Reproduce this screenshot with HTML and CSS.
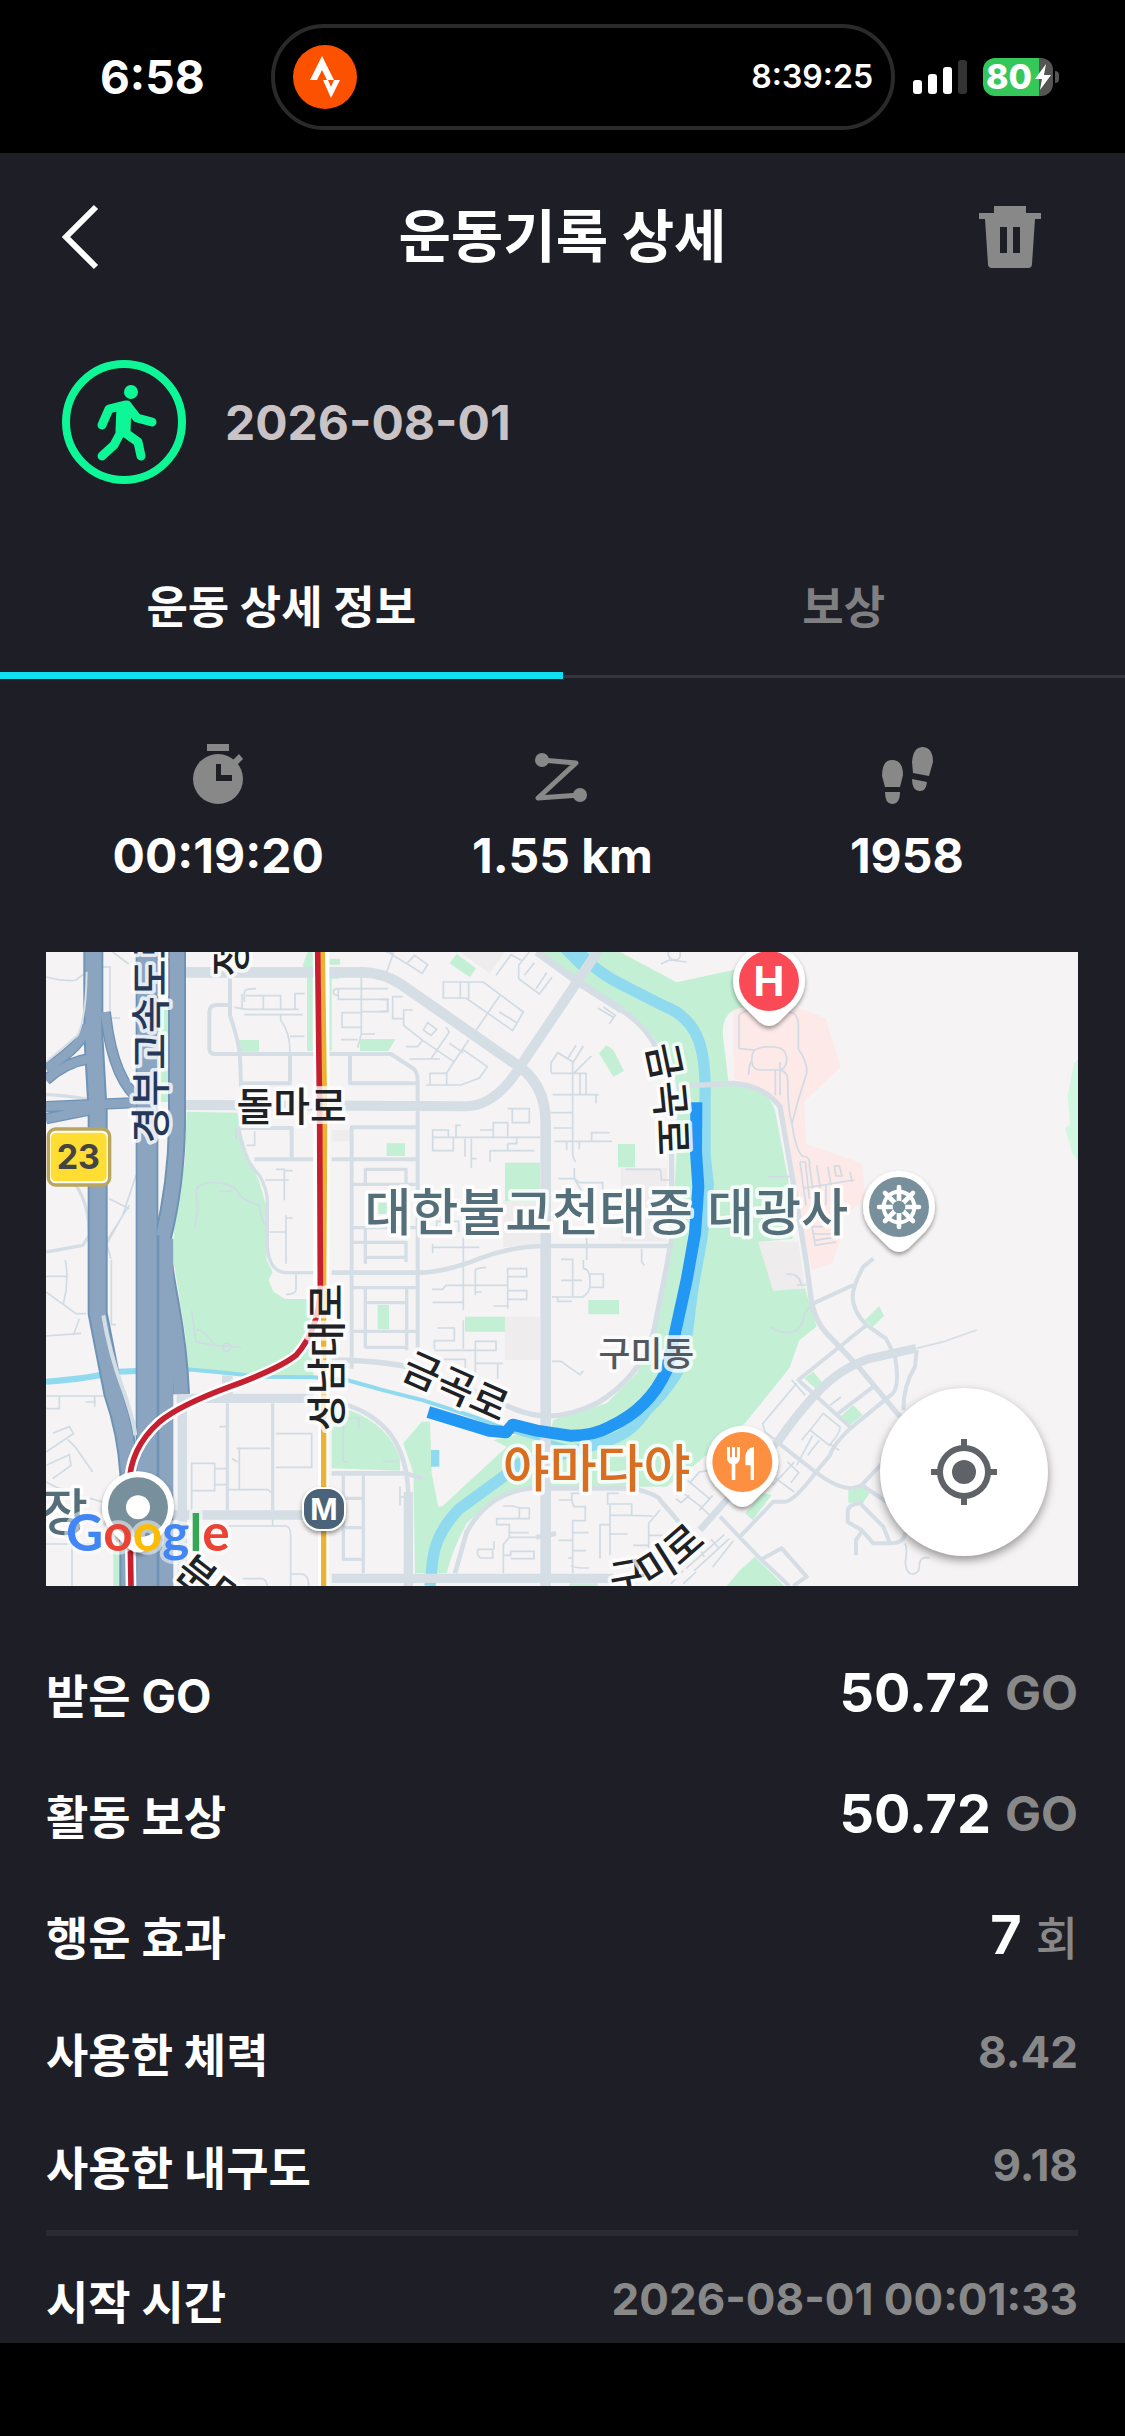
FILE: index.html
```
<!DOCTYPE html>
<html lang="ko">
<head>
    <meta charset="UTF-8">
    <meta name="viewport" content="width=device-width, initial-scale=1.0">
    <title>운동기록 상세</title>
    <link rel="stylesheet" href="styles.css">
</head>
<body>
<div class="status-bar">
    <span class="clock">6:58</span>
    <div class="island">
        <svg class="island-icon" viewBox="0 0 64 64">
            <circle cx="32" cy="32" r="32" fill="#fc5200"/>
            <path d="M29 11 L41 35 H34 L29 25 L24 35 H17Z" fill="#fff"/>
            <path d="M30 35 H35 L38 42 L41 35 H47 L38 53Z" fill="#fff"/>
        </svg>
        <span class="timer">8:39:25</span>
    </div>
    <div class="indicators">
        <svg class="signal" viewBox="0 0 54 34">
            <rect x="0" y="20" width="9" height="14" rx="3" fill="#fff"/>
            <rect x="15" y="14" width="9" height="20" rx="3" fill="#fff"/>
            <rect x="30" y="7" width="9" height="27" rx="3" fill="#fff"/>
            <rect x="45" y="0" width="9" height="34" rx="3" fill="#333"/>
        </svg>
        <div class="battery">
            <span>80</span>
            <svg class="bolt" viewBox="0 0 18 26"><path d="M12 0 L1 15 H8 L6 26 L17 11 H10Z" fill="#fff"/></svg>
        </div>
    </div>
</div>

<main class="screen">
    <header class="top-bar">
        <button type="button" class="icon-button back" aria-label="뒤로">
            <svg class="back-icon" viewBox="0 0 38 66"><path d="M35 3 L5 33 L35 63" fill="none" stroke="#fff" stroke-width="6"/></svg>
        </button>
        <h1>운동기록 상세</h1>
        <button type="button" class="icon-button" aria-label="삭제">
            <svg class="trash-icon" viewBox="0 0 62 62">
                <path fill="#888" fill-rule="evenodd" d="M15 0 H47 V7 H62 V13 H56 L53 58 Q53 62 49 62 H13 Q9 62 9 58 L6 13 H0 V7 H15Z M21 21 H28 V47 H21Z M34 21 H41 V47 H34Z"/>
            </svg>
        </button>
    </header>

    <section class="workout">
        <svg class="walk-icon" viewBox="0 0 126 126" fill="none" stroke="#0df797" stroke-linecap="round" stroke-linejoin="round">
            <circle cx="63" cy="63" r="58" stroke-width="8"/>
            <circle cx="70" cy="33" r="7" fill="#0df797" stroke="none"/>
            <path d="M64 46 L48 50 L41 66 M66 46 L76 59 L91 63 M61 71 L53 86 L41 97 M63 73 L77 83 L80 97" stroke-width="9"/>
            <path d="M59 47 L67 47 L66 72 L58 72Z" fill="#0df797" stroke-width="7"/>
        </svg>
        <time>2026-08-01</time>
    </section>

    <nav class="tabs">
        <button type="button" class="tab active">운동 상세 정보</button>
        <button type="button" class="tab">보상</button>
    </nav>

    <section class="stats">
        <div class="stat">
            <svg viewBox="0 0 60 60">
                <rect x="19" y="0" width="22" height="7"/>
                <circle cx="30" cy="35" r="25"/>
                <path d="M43 18 L51 10 L55 15 L48 22Z"/>
                <path d="M28 20 H33 V31 H44 V37 H28Z" fill="#1e1e27"/>
            </svg>
            <span>00:19:20</span>
        </div>
        <div class="stat">
            <svg viewBox="0 0 60 60">
                <circle cx="10" cy="16" r="7"/>
                <circle cx="48" cy="51" r="7"/>
                <path d="M10 16 L44 19 L6 54 L48 51" fill="none" stroke="#888" stroke-width="5" stroke-linejoin="round"/>
            </svg>
            <span>1.55 km</span>
        </div>
        <div class="stat">
            <svg viewBox="0 0 60 60">
                <path d="M8 43 L5 32 Q5 16 15 16 Q26 16 26 31 L23 43Z M8 48 H23 Q23 60 15 60 Q8 60 8 48Z"/>
                <path d="M36 29 L35 18 Q36 3 46 3 Q56 4 56 18 L52 32Z M35 35 L50 38 Q49 48 42 47 Q35 46 35 35Z"/>
            </svg>
            <span>1958</span>
        </div>
    </section>

    <section class="map">
        <svg class="map-canvas" viewBox="0 0 3096 1902" role="img" aria-label="운동 경로 지도">
            <defs>
                <path id="pin" d="M-80 72 A108 108 0 1 1 80 72 L28 124 Q0 146 -28 124Z"/>
                <path id="curve-river" d="M1799 284 Q1836 400 1838 640"/>
                <path id="curve-gumi" d="M1698 1922 Q1798 1925 1884 1858 L2040 1722"/>
                <filter id="shadow" x="-30%" y="-30%" width="160%" height="160%">
                    <feDropShadow dx="0" dy="8" stdDeviation="7" flood-opacity="0.4"/>
                </filter>
            </defs>
            <rect width="3096" height="1902" fill="#f5f3f4"/>

            <!-- grey blocks and hospital -->
            <path class="block" d="M1242 0 H1377 L1330 64Z M1725 649 H1862 V869 H1725Z M1372 744 H1482 V884 H1372Z M1377 1094 H1482 V1224 H1377Z M857 534 H912 V568 H857Z"/>
            <path fill="#fde9e7" d="M2062 169 L2277 174 L2339 199 L2384 346 L2274 449 L2280 576 L2447 634 L2460 739 L2382 800 V864 L2357 934 L2297 954 L2202 480 Q2160 400 2064 382Z"/>

            <!-- parks -->
            <g fill="#c3f0d5">
                <path d="M422 479 L574 482 L582 524 Q600 610 640 690 L660 760 L662 924 L680 960 L668 984 L682 1019 L717 1041 H802 V1276 L425 1255 L418 1150 L382 920 L385 820 L417 624Z"/>
                <path d="M785 0 H800 V297 H783 V60 L770 40Z M850 0 V20 H882 V38 H850 V297 H857 V80 H880 V60 H850Z M577 264 H639 V299 H577Z M942 261 H1049 L1027 297 H942Z M997 752 H1022 V786 H997Z M1022 574 H1077 V612 H1022Z"/>
                <path d="M1232 6 L1290 49 L1272 76 L1210 34Z M1682 279 L1702 294 L1734 357 L1702 374 L1659 304Z M1716 576 H1767 V646 H1716Z M1377 632 H1482 V747 H1377Z"/>
                <path d="M1482 0 H1722 L1892 91 L2062 54 L2100 60 V165 Q2020 170 2032 264 L2047 385 L2052 400 Q2180 400 2192 500 L2227 684 L2240 860 L2137 870 L2182 1015 L2277 1009 L2312 1124 L2260 1164 L2230 1249 L2097 1414 L1932 1550 L1862 1604 H1500 Q1360 1620 1262 1714 Q1220 1790 1202 1864 H1107 L1102 1564 L1072 1474 L1127 1409 H1152 L1157 1564 L1177 1664 L1190 1662 L1382 1484 L1342 1464 L1517 1424 L1522 1404 L1682 1354 L1772 1264 L1822 1154 L1872 924 L1892 604 V409 L1882 350 L1822 254 L1742 174 L1602 84Z"/>
                <path d="M2127 1814 L2215 1902 H2042 L2082 1855Z M2500 1062 L2514 1092 L2480 1124 L2457 1104Z M2302 1259 L2332 1296 L2310 1312 L2275 1279Z M2422 1359 L2450 1389 L2412 1419 L2385 1392Z M2177 1629 L2120 1704 L2097 1684 L2150 1624Z M2407 1614 L2452 1604 L2470 1624 L2452 1652 H2407Z"/>
                <path d="M857 1374 L910 1374 Q1030 1420 1062 1520 V1556 L857 1549Z M1257 1094 H1377 V1139 H1257Z M1627 1044 H1719 V1087 H1627Z M995 1059 H1029 V1132 H995Z M202 1794 H222 V1902 H202Z M336 150 H366 V450 H336Z M1570 1894 H1655 V1902 H1570Z"/>
            </g>
            <path fill="#d3f8e2" d="M3096 322 L3084 334 L3065 431 L3072 519 L3057 526 L3079 604 L3096 629Z"/>
            <path class="block" d="M2137 869 H2257 L2277 1009 L2182 1016Z"/>

            <!-- water -->
            <g fill="none" stroke="#8fdaee">
                <path stroke-width="34" d="M1600 0 Q1652 64 1742 105 L1850 160 Q1932 190 1960 270 Q1980 330 1977 444 V610 L1987 700 L1967 864 L1942 1000 L1932 1074 Q1920 1200 1892 1264 Q1850 1330 1802 1374 Q1760 1440 1692 1464 L1562 1504 L1422 1534 L1372 1574 L1242 1669 Q1170 1740 1160 1824 L1152 1902"/>
                <path stroke-width="50" d="M1560 -20 L1630 50"/>
                <path stroke-width="16" d="M1920 200 Q1955 260 1965 330"/>
                <path stroke-width="18" d="M0 1289 Q130 1280 200 1260 L290 1256"/>
                <path stroke-width="12" d="M400 1250 Q520 1260 652 1274 L802 1276 L902 1284 Q960 1300 1002 1312 L1132 1345 L1282 1394 L1402 1439 L1620 1500"/>
            </g>
            <rect x="1155" y="1494" width="25" height="50" fill="#8fdaee"/>

            <!-- lanes -->
            <g class="lane">
                <path d="M0 75 Q60 90 90 84 L122 60 M160 45 H192 V198 H222 M200 0 L248 36 M595 150 V120 Q595 110 630 110 M600 131 H704 V172 M652 131 V170 M565 166 L600 172 H758 M747 172 V125 H776 M595 188 H770 M704 188 V205 Q732 240 732 300 M732 253 H775 M1027 110 H877 Q862 110 862 120 T877 130 M877 110 V142 H1025 V179 H946 V75 M946 182 H888 V226 H946 M946 179 V246 H987 M946 246 L935 287 M885 263 H935"/>
                <path d="M1020 0 L1042 4 L1022 60 M1032 4 L1082 35 L1106 10 L1145 38 L1128 64 L1085 36 M1192 90 H1312 L1432 180 L1400 236 L1260 138 H1192Z M1243 90 V138 M1268 90 V140 M1362 130 L1290 235 M1360 180 L1412 212 M1350 70 L1395 8 L1428 26 M1450 0 L1418 40 V80 L1480 126 L1518 76 M1435 70 L1465 32 M1470 110 L1502 62"/>
                <path d="M1002 142 H1025 V178 H1002 M1070 134 H1040 V200 H1073 V174 H1100 M1073 200 V220 L1130 265 L1222 328 M1080 284 H1115 L1130 265 M1145 212 L1172 232 L1155 250 L1132 234Z M1200 226 L1210 240 L1155 320 M1090 321 H1182 M1268 264 L1202 362 V398 M1250 292 L1324 344 L1300 378 L1245 399 H1140 M1152 398 V364 H1202 M1210 274 L1252 302"/>
                <path d="M1515 362 V332 L1535 302 L1582 330 L1612 282 M1515 364 H1620 V430 M1566 318 L1590 280 M1580 330 V610 L1588 630 M1602 364 V430 M1583 364 L1636 312 M1520 428 H1658 M1650 430 V454 M1515 482 H1580 M1522 528 H1580 M1525 568 H1698 M1637 568 V542 H1690 M1562 568 V594 M1600 568 V592 M1585 648 V680 L1620 740 M1537 680 H1585 L1600 692 H1670 V740 M1655 168 L1702 196 M1672 165 L1708 190 L1690 215 M1845 36 L1870 24 L1922 30 M1866 0 Q1866 24 1890 24 Q1906 20 1902 0"/>
                <path d="M1160 556 V534 H1207 V556 M1160 556 H1222 V596 H1160Z M1160 556 H1482 M1230 556 V520 H1245 M1302 534 H1342 V556 M1342 534 V512 H1385 V556 M1385 470 H1450 V512 H1399 V470 M1385 575 H1412 V556 M1385 575 V596 M1332 630 V596 H1465 M1257 560 V614 M1276 560 V648 M1276 620 H1292 M1738 652 H1840 Q1846 654 1846 684 H1870 M1160 886 H1300 M1160 876 V904 M1252 826 V1074 M1172 826 V808 H1238 V840 M1545 922 H1580 V1035 M1622 840 V924 M1787 890 V930 L1795 940"/>
                <path d="M1158 1012 H1190 L1200 1000 H1385 M1288 1030 V955 Q1290 948 1320 946 M1288 1020 H1308 M1385 1070 V950 H1442 V974 H1385 M1385 1016 H1442 V1042 H1385 M1342 1062 H1385 M1160 1051 H1254 M1252 1105 V1190 M1175 1128 H1225 V1166 H1165 V1190 M1165 1195 H1350 V1168 H1288 V1270 M1175 1222 H1258 V1250 M1288 1234 H1370 M1355 1234 V1280 M1518 1035 H1610 Q1635 1020 1632 990 Q1632 950 1612 950 V924 M1632 966 H1672 V1006 H1632 M1545 985 H1608 M1535 1035 V1048 H1578 M1518 1228 H1545 Q1575 1250 1602 1268 L1612 1256"/>
                <path d="M1372 1662 H1400 L1420 1668 H1450 V1700 H1352 V1718 H1390 V1756 M1420 1668 V1700 M1390 1742 H1448 M1390 1756 H1482 M1390 1756 L1372 1778 V1864 M1296 1792 H1340 V1818 H1305 Q1290 1810 1296 1792 M1344 1768 V1792 M1372 1810 H1394 V1798 H1464 V1820 H1394 M1574 1624 H1605 M1578 1625 Q1575 1650 1584 1664 H1618 V1706 H1580 V1864 M1538 1644 H1578 M1538 1765 H1580 M1578 1742 H1628 M1580 1796 H1620 M1566 1818 H1580 M1575 1840 Q1580 1848 1628 1848 M1718 1624 H1685 V1656 H1757 V1690 L1820 1692 M1692 1656 V1810 M1692 1690 H1755 M1692 1746 H1745 M1662 1820 V1718 H1690 M1842 1674 L1808 1714 V1810 M1808 1750 H1850 M1762 1780 H1808"/>
                <path d="M1890 1640 L1905 1652 L1930 1630 M1890 1630 L1900 1615 L1960 1660 L2002 1700 M1930 1594 L1960 1560 L1990 1555 M1925 1585 L1990 1640 M1960 1675 L2000 1630 M1920 1850 L2035 1748 M1945 1856 L2050 1760 M1975 1815 L1960 1790 M2000 1845 L2062 1766 M1995 1762 L2020 1790 M1875 1895 L1912 1856 M1912 1895 L1950 1860"/>
                <path d="M437 1686 V1534 H506 V1616 H437 M506 1550 H542 M506 1598 H542 M572 1489 H672 M580 1489 V1612 M546 1613 H665 L680 1625 M690 1445 H797 V1546 H690 M558 1520 L575 1530 M520 1424 H542 M546 1722 H720 Q734 1725 734 1750 V1902 M680 1700 V1722 M734 1866 H770 Q788 1870 788 1902 M590 1880 H650 Q662 1885 664 1902 M1062 1604 V1660 M1062 1635 H1075 M892 1400 V1530 H905 M892 1398 H940 M938 1396 V1430 M1010 1528 H1058"/>
                <path d="M0 973 H64 M58 924 Q70 990 52 1055 M0 1020 L90 1085 H120 M82 1150 L100 1100 M0 1152 L105 1144 M0 1332 H180 M40 1332 V1370 H0 M118 1350 H150 M146 1332 V1364 M20 1444 L70 1424 L82 1445 L0 1500 M65 1462 L90 1488 L140 1560 M0 1540 L70 1508 L75 1540 L20 1580 M0 1590 L30 1605 L100 1630 L170 1650 M78 1728 V1902 M0 1776 H170 M196 924 V1118 H210 M180 880 L230 790 L270 670 M190 740 L250 770 M250 760 L180 870 L195 920"/>
                <path d="M447 826 L455 770 L450 720 Q452 690 510 692 Q560 695 574 718 Q580 740 640 760 Q645 810 660 820 M520 718 H560 M437 1075 L450 1170 L505 1180 L585 1186 M450 1130 Q480 1140 505 1178 M530 1186 A12 12 0 1 1 554 1186 A12 12 0 1 1 530 1186 M690 652 H715 V745 M658 684 H728 M715 656 H740 M720 790 V935 M720 798 H740 M670 840 H720 M750 964 V1015 Q748 1025 720 1028 M626 538 V580 H602 M570 528 V560 M588 126 V170"/>
                <path d="M2079 290 V190 Q2085 180 2110 175 L2240 182 Q2257 190 2257 220 V290 Q2290 340 2280 370 L2255 450 L2238 515 Q2250 600 2270 612 Q2295 615 2290 640 L2310 770 M2079 290 L2125 294 Q2115 310 2118 330 Q2120 352 2140 354 H2200 Q2222 350 2222 320 Q2220 285 2180 285 H2150 L2125 294 M2108 368 Q2108 340 2118 325 M2188 354 V430 M2202 330 V430 M2200 352 Q2225 360 2225 380 Q2225 470 2238 515 M2262 630 L2280 760 M2262 630 H2278 L2290 740 M2275 708 L2425 684 M2312 640 L2325 720 M2346 645 L2355 700 M2365 642 H2380 L2388 672 H2370Z M2412 660 L2418 690 M2340 700 V760 M2298 824 L2308 880 L2370 870 M2298 824 H2330 M2302 846 H2365 M2305 865 L2365 856 M2165 674 H2232"/>
                <path d="M2172 1125 Q2200 1145 2240 1140 Q2270 1130 2275 1085 L2290 1065 M2222 966 Q2262 964 2265 998 M2252 999 H2280 M2157 1440 L2150 1415 L2252 1294 M2237 1284 L2278 1330 M2157 1440 L2192 1466 M2332 1384 L2382 1425 Q2385 1440 2350 1480 L2292 1434Z M2352 1360 L2385 1335 M2267 1465 L2292 1434 M2285 1510 L2320 1465 M2252 1540 L2300 1450 M2350 1475 L2380 1495 M2190 1580 L2245 1620 M2245 1530 L2180 1600 M2225 1530 L2258 1562 L2235 1592 M2577 1774 Q2585 1790 2578 1830 Q2580 1866 2600 1866 Q2622 1864 2620 1838 Q2622 1812 2650 1818"/>
            </g>

            <!-- streets -->
            <g class="street">
                <path d="M412 61 H952 Q1010 62 1062 95 L1400 330 Q1499 390 1499 510 V1902" stroke-width="32"/>
                <path d="M1657 -5 L1422 344 Q1350 460 1262 463 L412 459" stroke-width="30"/>
                <path d="M382 1689 H802 M857 1879 H1702 M392 1339 H802 M409 1339 V1902 M1087 1902 V1620" stroke-width="28"/>
                <path d="M544 1270 V1339" stroke-width="32"/>
                <path d="M1472 0 L1602 94 L1727 174" stroke-width="22"/>
                <path d="M1727 174 Q1802 224 1832 290 M1877 604 V860 L1862 944 L1822 1144 Q1780 1280 1652 1354 Q1560 1400 1480 1390 Q1420 1384 1340 1340 L1150 1262 Q1050 1226 857 1224 M1892 403 L2062 394 Q2152 400 2202 464 L2242 694 L2280 924 L2297 1054 Q2310 1110 2342 1144 L2437 1244 L2562 1394" stroke-width="16"/>
                <path d="M1087 1620 Q1080 1480 1002 1414 Q940 1360 857 1350 M857 1564 H1080 L1130 1580 M1227 1864 L1262 1740 Q1330 1620 1452 1609 H1762 Q1842 1630 1842 1644 L1902 1714 M857 962 H1122 Q1200 960 1300 920 Q1400 882 1502 882 H1872 M1470 1756 L1530 1745" stroke-width="14"/>
                <path d="M552 74 V190 Q582 280 582 320 L587 450 M552 159 H510 Q490 160 490 180 V290 Q490 306 510 306 H1035 L1095 345 Q1115 355 1115 385 V1200 M732 306 V394 H590 M912 306 V394 H1115 M580 528 H737 V622 M625 622 H802 M857 622 H1115 M1115 526 H917 V1250" stroke-width="12"/>
                <path d="M577 524 Q590 620 640 670 Q664 710 664 750 V884 Q670 960 720 962 H802 M917 697 H1115 M958 700 V652 H1080 V697 M917 827 H1115 M917 871 H1080 V930 M958 916 H1080 M958 827 V935 M917 1007 H1115 M958 1007 V1188 M958 1052 H1082 M917 1138 H1115 M958 1186 H1082 M1082 1007 V1195 M892 1564 V1822 H952 M952 1564 V1864 M892 1639 H952 M892 1727 H952 M544 1354 V1674 M680 1354 V1674 M0 428 Q60 430 130 442 M0 900 L110 880 L130 850 Q130 760 90 700" stroke-width="10"/>
                <path d="M2192 1474 Q2262 1374 2312 1324 Q2380 1250 2470 1220 L2610 1189" stroke-width="26"/>
                <path d="M2192 1474 L1962 1734" stroke-width="20"/>
                <path d="M2302 1054 L2422 999 M2482 920 L2452 944 Q2422 1000 2420 1030 Q2420 1080 2462 1119 L2520 1160 L2547 1214 Q2562 1300 2540 1325 L2412 1430 Q2360 1480 2352 1510 L2307 1564 Q2250 1640 2220 1649 H2182 L2082 1754 M2462 1119 L2257 1284 L2412 1424 M2482 1304 L2377 1384 M2192 1469 L2307 1559 Q2400 1630 2447 1599 L2522 1520 M2447 1599 L2522 1650 M2022 1694 L2142 1819 L2230 1902 M2142 1824 L2207 1789 L2282 1874 L2242 1902 M2452 1654 Q2405 1654 2405 1680 V1710 L2447 1734 L2482 1774 H2532 Q2577 1774 2577 1740 M2447 1659 L2512 1724 L2532 1774 M2447 1739 L2430 1764 V1809 M2612 1194 L2607 1244 Q2572 1300 2572 1374" stroke-width="12"/>
                <path d="M2612 1189 L2692 1169 L2792 1134" stroke-width="5"/>
            </g>

            <!-- expressways -->
            <g fill="none" stroke="#6f93b5">
                <path d="M142 -10 V250 L155 480 V1084 L202 1324 Q242 1440 250 1564 V1902" stroke-width="60"/>
                <path d="M393 -10 V520 Q390 700 350 860 Q345 900 375 1060 Q400 1200 405 1326" stroke-width="54"/>
                <path d="M303 -10 V1902" stroke-width="68"/>
                <path d="M0 384 Q60 330 130 320 M0 350 Q110 280 125 220 M178 180 Q200 390 290 450 M0 464 L270 452 M0 500 L150 470" stroke-width="34"/>
            </g>
            <g fill="none" stroke="#8ba4c0">
                <path d="M142 -10 V250 L155 480 V1084 L202 1324 Q242 1440 250 1564 V1902" stroke-width="48"/>
                <path d="M393 -10 V520 Q390 700 350 860 Q345 900 375 1060 Q400 1200 405 1326" stroke-width="42"/>
                <path d="M303 -10 V1902" stroke-width="58"/>
                <path d="M335 860 V1902" stroke-width="94"/>
                <path d="M0 384 Q60 330 130 320 M0 350 Q110 280 125 220 M178 180 Q200 390 290 450 M0 464 L270 452 M0 500 L150 470" stroke-width="26"/>
            </g>
            <path d="M336 850 V1902" fill="none" stroke="#6f93b5" stroke-width="8"/>
            <path d="M172 1090 Q190 1200 230 1310 Q262 1400 268 1450" fill="none" stroke="#d5dee5" stroke-width="12"/>
            <path d="M122 60 Q120 200 95 250 L0 330" fill="none" stroke="#d5dee5" stroke-width="6"/>

            <!-- railways -->
            <g fill="none">
                <path class="casing-wide" d="M826 -5 V1080"/>
                <path d="M832 1000 V1902" stroke="#fff" stroke-width="32"/>
                <path d="M824 1000 Q822 1130 750 1210 Q700 1250 552 1304 Q400 1360 340 1410 Q250 1490 250 1600 L255 1902" stroke="#fff" stroke-width="32"/>
                <path d="M829 -5 L836 500 L833 1000 V1902" stroke="#ecb233" stroke-width="16"/>
                <path d="M815 -5 L821 500 L823 1000 Q822 1130 750 1210 Q700 1250 552 1304 Q400 1360 340 1410 Q250 1490 250 1600 L255 1902" stroke="#c62030" stroke-width="17"/>
            </g>

            <!-- workout route -->
            <path d="M1951 451 L1950 600 L1957 704 L1947 844 L1922 984 L1887 1144 L1862 1254 Q1810 1370 1692 1424 Q1640 1452 1572 1451 L1472 1436 L1400 1418 L1380 1441 L1330 1436 L1147 1380" fill="none" stroke="#2297f3" stroke-width="36" stroke-linejoin="round"/>

            <!-- place names -->
            <g class="road-name">
                <text x="737" y="508" text-anchor="middle">돌마로</text>
                <text transform="translate(358 574) rotate(-90)" class="express">경부고속도로</text>
                <text transform="translate(598 74) rotate(-90)">정자로</text>
                <text transform="translate(884 1437) rotate(-90)">성남대로</text>
                <text transform="translate(1212 1343) rotate(24)" text-anchor="middle">금곡로</text>
                <text transform="translate(382 1868) rotate(38)">분당로</text>
                <text><textPath href="#curve-river">금곡로</textPath></text>
                <text><textPath href="#curve-gumi">구미로</textPath></text>
            </g>
            <text class="district" x="1801" y="1242" text-anchor="middle">구미동</text>
            <text class="place" x="1681" y="836" text-anchor="middle">대한불교천태종 대광사</text>
            <text class="place food" x="1652" y="1604" text-anchor="middle">야마다야</text>
            <text class="place" x="126" y="1736" text-anchor="end">주차장</text>

            <!-- pins -->
            <g transform="translate(2169 87)">
                <use href="#pin" fill="#fff" filter="url(#shadow)"/>
                <circle r="90" fill="#f94a55"/>
                <text class="pin-letter" y="45" text-anchor="middle">H</text>
            </g>
            <g transform="translate(2559 765)">
                <use href="#pin" fill="#fff" filter="url(#shadow)"/>
                <circle r="90" fill="#78909c"/>
                <circle r="46" fill="none" stroke="#fff" stroke-width="12"/>
                <path d="M0 -60 V60 M-60 0 H60 M-42 -42 L42 42 M-42 42 L42 -42" stroke="#fff" stroke-width="14" stroke-linecap="round"/>
                <circle r="19" fill="#78909c"/>
            </g>
            <g transform="translate(2089 1530)">
                <use href="#pin" fill="#fff" filter="url(#shadow)"/>
                <circle r="90" fill="#fc9040"/>
                <path fill="#fff" d="M-46 -45 H-37 V-14 H-31 V-45 H-22 V-14 H-16 V-45 H-7 V-14 Q-8 2 -21 7 V54 H-32 V7 Q-46 2 -46 -14Z M35 -45 V54 H25 V10 H9 V-14 Q10 -42 35 -45Z"/>
            </g>
            <g transform="translate(276 1666)">
                <use href="#pin" fill="#fff" filter="url(#shadow)"/>
                <circle r="90" fill="#78909c"/>
                <circle r="36" fill="#fff"/>
            </g>
            <g transform="translate(834 1671)">
                <rect x="-66" y="-66" width="132" height="132" rx="54" fill="#fff" filter="url(#shadow)"/>
                <rect x="-60" y="-60" width="120" height="120" rx="48" fill="#4a6378"/>
                <text class="metro" y="32" text-anchor="middle">M</text>
            </g>
            <rect x="7" y="531" width="184" height="168" rx="22" fill="#fff" stroke="#b9a55b" stroke-width="10"/>
            <rect x="14" y="542" width="168" height="146" rx="16" fill="#ffdd33"/>
            <text class="route-no" x="97" y="652" text-anchor="middle">23</text>

            <text class="google" x="60" y="1796"><tspan fill="#4285f4">G</tspan><tspan fill="#ea4335">o</tspan><tspan fill="#fbbc05">o</tspan><tspan fill="#4285f4">g</tspan><tspan fill="#34a853">l</tspan><tspan fill="#ea4335">e</tspan></text>
        </svg>
        <button type="button" class="locate" aria-label="내 위치">
            <svg viewBox="0 0 66 66" fill="none" stroke="#5f6368" stroke-width="6">
                <circle cx="33" cy="33" r="24"/>
                <circle cx="33" cy="33" r="12" fill="#5f6368" stroke="none"/>
                <path d="M33 0 V9 M33 57 V66 M0 33 H9 M57 33 H66"/>
            </svg>
        </button>
    </section>

    <dl class="details">
        <div class="row"><dt>받은 GO</dt><dd><b>50.72</b> <span>GO</span></dd></div>
        <div class="row"><dt>활동 보상</dt><dd><b>50.72</b> <span>GO</span></dd></div>
        <div class="row"><dt>행운 효과</dt><dd><b>7</b> <span class="unit-ko">회</span></dd></div>
        <div class="row small"><dt>사용한 체력</dt><dd>8.42</dd></div>
        <div class="row small"><dt>사용한 내구도</dt><dd>9.18</dd></div>
        <div class="row time"><dt>시작 시간</dt><dd>2026-08-01 00:01:33</dd></div>
    </dl>
</main>
</body>
</html>
```

FILE: styles.css
```
* {
  box-sizing: border-box;
}

body {
  margin: 0;
  background-color: #000;
  color: #fff;
  font-family: Inter, "Noto Sans CJK KR", sans-serif;
  font-weight: 700;
}

button {
  padding: 0;
  border: none;
  background: none;
  color: inherit;
  font: inherit;
  cursor: pointer;
}

svg {
  display: block;
}

/* status bar */
.status-bar {
  display: flex;
  align-items: center;
  height: 153px;
  padding: 0 72px 0 100px;
}

.clock {
  flex: 1;
  font-size: 46px;
}

.island {
  display: flex;
  align-items: center;
  justify-content: space-between;
  width: 624px;
  height: 106px;
  padding: 0 18px;
  border: 4px solid #2a2a2a;
  border-radius: 53px;
}

.island-icon {
  width: 64px;
  height: 64px;
}

.timer {
  font-size: 32px;
  font-weight: 600;
}

.indicators {
  display: flex;
  align-items: center;
  gap: 16px;
  margin-left: 18px;
}

.signal {
  width: 54px;
  height: 34px;
}

.battery {
  position: relative;
  display: flex;
  align-items: center;
  width: 70px;
  height: 38px;
  padding-left: 3px;
  border-radius: 12px;
  background: linear-gradient(to right, #34c759 80%, #555 80%);
  font-size: 34px;
  font-weight: 800;
}

.battery::after {
  content: "";
  position: absolute;
  right: -6px;
  top: 13px;
  width: 4px;
  height: 12px;
  border-radius: 0 4px 4px 0;
  background-color: #555;
}

.bolt {
  position: absolute;
  right: 1px;
  top: 6px;
  width: 18px;
  height: 26px;
}

/* page */
.screen {
  background-color: #1e1e27;
}

.top-bar {
  display: grid;
  grid-template-columns: 146px 1fr 146px;
  align-items: center;
  height: 168px;
}

.top-bar h1 {
  margin: 0;
  font-size: 57px;
  line-height: 64px;
  text-align: center;
}

.icon-button.back {
  padding-left: 61px;
}

.back-icon {
  width: 38px;
  height: 66px;
}

.trash-icon {
  width: 62px;
  height: 62px;
}

.workout {
  display: flex;
  align-items: center;
  gap: 38px;
  padding: 38px 61px 52px;
  color: #c9c3c6;
  font-size: 48px;
}

.walk-icon {
  width: 126px;
  height: 126px;
}

.tabs {
  display: flex;
  height: 141px;
  border-bottom: 3px solid #35343f;
}

.tab {
  position: relative;
  flex: 1;
  padding-bottom: 3px;
  color: #7f7f82;
  font-size: 45px;
}

.tab.active {
  color: #fff;
}

.tab.active::after {
  content: "";
  position: absolute;
  left: 0;
  right: 0;
  bottom: -4px;
  height: 7px;
  background-color: #0ee2f2;
}

.stats {
  display: grid;
  grid-template-columns: repeat(3, 1fr);
  padding: 66px 46px 68px;
}

.stat {
  display: flex;
  flex-direction: column;
  align-items: center;
  gap: 24px;
  font-size: 48px;
  line-height: 56px;
}

.stat svg {
  width: 60px;
  height: 60px;
  fill: #888;
}

/* map */
.map {
  position: relative;
  margin: 0 47px 0 46px;
}

.map-canvas {
  width: 100%;
  height: auto;
}

.locate {
  position: absolute;
  right: 30px;
  bottom: 30px;
  display: flex;
  align-items: center;
  justify-content: center;
  width: 168px;
  height: 168px;
  border-radius: 50%;
  background-color: #fff;
  box-shadow: 0 4px 10px rgba(0, 0, 0, 0.4);
}

.locate svg {
  width: 66px;
  height: 66px;
}

.block {
  fill: #eeecec;
}

.lane {
  fill: none;
  stroke: #d0dbe4;
  stroke-width: 5px;
}

.street {
  fill: none;
  stroke: #d5dee5;
  stroke-linejoin: round;
}

.casing-wide {
  stroke: #fff;
  stroke-width: 48px;
}

.map-canvas text {
  font-family: "Noto Sans CJK KR", sans-serif;
  font-weight: 500;
  paint-order: stroke;
  stroke: rgba(255, 255, 255, 0.8);
  stroke-width: 22px;
  stroke-linejoin: round;
}

.map-canvas .road-name {
  font-size: 120px;
  fill: #202124;
}

.map-canvas .express {
  fill: #26385a;
}

.map-canvas .district {
  font-size: 104px;
  fill: #55585d;
}

.map-canvas .place {
  font-size: 153px;
  fill: #546e7a;
}

.map-canvas .food {
  fill: #d96d20;
}

.map-canvas .pin-letter,
.map-canvas .metro,
.map-canvas .route-no {
  font-family: Inter, sans-serif;
  font-weight: 700;
  font-size: 124px;
  fill: #fff;
  stroke: none;
}

.map-canvas .metro {
  font-size: 88px;
}

.map-canvas .route-no {
  font-size: 102px;
  fill: #444;
}

.map-canvas .google {
  font-family: Lato, sans-serif;
  font-size: 154px;
  font-weight: 700;
  stroke: rgba(255, 255, 255, 0.5);
}

/* details */
.details {
  margin: 0;
  padding: 46px 47px 0 46px;
}

.row {
  display: flex;
  align-items: center;
  justify-content: space-between;
  height: 121px;
  font-size: 46px;
}

.row.small {
  height: 113px;
}

.row.time {
  height: 113px;
  margin-top: 9px;
  padding-top: 18px;
  border-top: 6px solid #2a2a35;
}

.row dd {
  display: flex;
  align-items: center;
  gap: 14px;
  margin: 0;
  color: #888;
  font-size: 48px;
}

.row.small dd,
.row.time dd {
  font-size: 44px;
}

.row b {
  color: #fff;
  font-size: 54px;
  font-weight: 700;
}

.row .unit-ko {
  font-size: 46px;
  font-weight: 500;
}
```
